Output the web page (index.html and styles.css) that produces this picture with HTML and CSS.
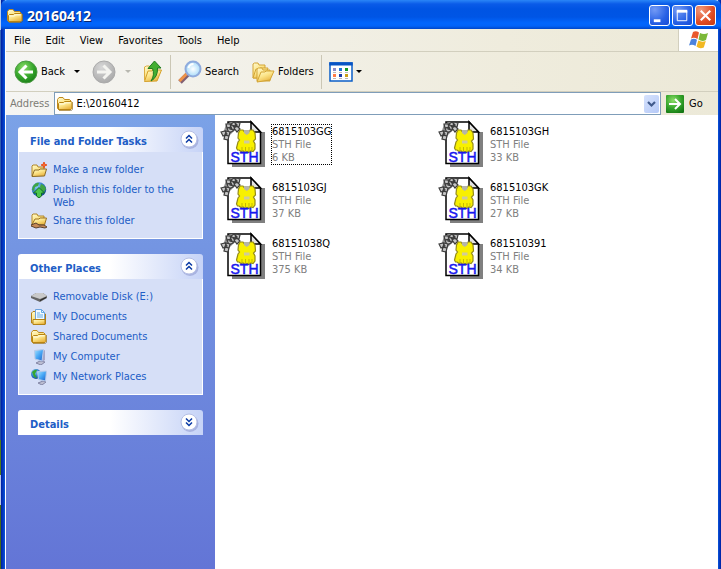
FILE: index.html
```
<!DOCTYPE html>
<html lang="en">
<head>
<meta charset="utf-8">
<title>20160412</title>
<link rel="stylesheet" href="styles.css">
</head>
<body>
<svg class="defs" aria-hidden="true">
  <defs>
    <linearGradient id="gold" x1="0" y1="0" x2="0.6" y2="1"><stop offset="0" stop-color="#fffbd2"/><stop offset="0.5" stop-color="#fce58a"/><stop offset="1" stop-color="#e9b440"/></linearGradient>
    <radialGradient id="green" cx="0.4" cy="0.3" r="0.8"><stop offset="0" stop-color="#8bdd68"/><stop offset="0.55" stop-color="#35a52b"/><stop offset="1" stop-color="#137613"/></radialGradient>
    <radialGradient id="grey" cx="0.4" cy="0.3" r="0.8"><stop offset="0" stop-color="#d8d8d8"/><stop offset="1" stop-color="#a4a4a4"/></radialGradient>
    <radialGradient id="lens"><stop offset="0" stop-color="#fff"/><stop offset="1" stop-color="#a9dcfa"/></radialGradient>
    <linearGradient id="screen" x1="0" y1="0" x2="1" y2="1"><stop offset="0" stop-color="#a7e2ff"/><stop offset="0.5" stop-color="#45a6f5"/><stop offset="1" stop-color="#1b5fc6"/></linearGradient>
    <radialGradient id="globe" cx="0.35" cy="0.3" r="0.8"><stop offset="0" stop-color="#8fd0f5"/><stop offset="0.6" stop-color="#2573c8"/><stop offset="1" stop-color="#123e80"/></radialGradient>
    <symbol id="folder" viewBox="0 0 16 16">
      <path d="M2 14.5h12.5l1-1V6" fill="none" stroke="#6d5a2c" opacity="0.5"/>
      <path d="M.5 12.5v-9l1.500-2h4l1.500 2h5l1.500 1.500v8l-1 1H2z" fill="url(#gold)" stroke="#c08a1c"/>
      <path d="M1.500 13.500V7.500l1-1h4l1-1h6.500l1 1v6l-1 1z" fill="url(#gold)" stroke="#b88413"/>
      <path d="M2.500 8h5l1-1.200h5" fill="none" stroke="#fffce2"/>
    </symbol>
    <symbol id="file" viewBox="0 0 48 48">
      <path d="M12 47v-4h29V12h4v35z" fill="#808080"/>
      <path d="M8 2h23l9.500 10v31.500H8z" fill="#fff" stroke="#000" stroke-width="1.500"/>
      <path d="M31 2v10h9.500z" fill="#e4e4e4" stroke="#000" stroke-width="1.500"/>
      <path d="M6 4l5-2 6 0 3 3-6 6-6 6-5-3z" fill="#8f8f8f"/>
      <g fill="#c6c6c6" stroke="#3c3c3c" stroke-width="1.200">
        <path d="M11 4l3-2 3 3-3 2zM16 2l4 1-1 4-4-1zM14 8l3-2 3 3-3 3zM7 8l4-1 2 4-4 2zM6 4l4 0 1 3-4 1zM11 5l4 1-1 4-4-1z"/>
        <path d="M1 12l4-1 2 3-4 2zM6 11l4 1-1 4-4-1zM5 15l4 1-1 4-4-1z"/>
      </g>
      <path d="M20 10h3l1 1.500h5L30 10h3l2 3 .5 6-2 2 1.500 3v5l-2 2.500-2-.5-2 1.500-2-1-2 1-2-1.500-2 .5-2-1.500-1.500 0-1-2 1.500-6 1.500-2-1.500-2 .5-5z" fill="#f8f000" stroke="#948b17" stroke-width="1.200"/>
      <path d="M24 10h5.500v3l-2.750 2L24 13z" fill="#b5b5a8"/>
      <path d="M24 20.500h5.500v3H24z" fill="#cfcb9c"/>
      <path d="M22 27v4M25.500 27v4M29 27v4M32 27v3" fill="none" stroke="#c5ba00"/>
      <text x="10.500" y="42" class="file-label">STH</text>
    </symbol>
    <symbol id="chevrons" viewBox="0 0 20 20">
      <circle cx="11" cy="11.500" r="8.500" fill="#6671b5" opacity="0.35"/>
      <circle cx="10" cy="10" r="8" fill="#fff" stroke="#b5bfe5"/>
      <path d="M7 9.500l3-3 3 3M7 13.500l3-3 3 3" fill="none" stroke="#0a3aa5" stroke-width="1.500"/>
    </symbol>
  </defs>
</svg>

<div class="window">
  <header class="titlebar">
    <svg class="i16" aria-hidden="true"><use href="#folder"/></svg>
    <h1>20160412</h1>
    <div class="controls">
      <button type="button" aria-label="Minimize"><svg viewBox="0 0 20 20"><path d="M4 14h7v3H4z" fill="#fff"/></svg></button>
      <button type="button" aria-label="Maximize"><svg viewBox="0 0 20 20"><path d="M4.500 5v10.500h10V5" fill="none" stroke="#fff"/><path d="M4 4h11v3H4z" fill="#fff"/></svg></button>
      <button type="button" class="close" aria-label="Close"><svg viewBox="0 0 20 20"><path d="M5 5l10 10M15 5L5 15" stroke="#fff" stroke-width="2.200"/></svg></button>
    </div>
  </header>

  <nav class="menubar">
    <button type="button">File</button>
    <button type="button">Edit</button>
    <button type="button">View</button>
    <button type="button">Favorites</button>
    <button type="button">Tools</button>
    <button type="button">Help</button>
    <div class="brand">
      <svg viewBox="0 0 20 18" aria-hidden="true">
        <path d="M4 1q3-1.500 6 .5L8.500 8Q5 6 2 7.500z" fill="#e9582c"/>
        <path d="M11 2q4 2 8 0l-2 7q-4 2-7.500-.5z" fill="#7bb938"/>
        <path d="M2 8.500q3-1.500 6 .3L6.500 15Q3.500 13 0 14.500z" fill="#4c82dc"/>
        <path d="M9.300 9.500q3.500 2 7.500.5l-2 6.500q-4 2-7.300-1z" fill="#f2b822"/>
      </svg>
    </div>
  </nav>

  <div class="toolbar">
    <button type="button">
      <svg class="i24" viewBox="0 0 24 24" aria-hidden="true"><circle cx="12" cy="12" r="11" fill="url(#green)" stroke="#4c9b43"/><path d="M12.500 5.500L6 12l6.500 6.500M6.500 12H19" fill="none" stroke="#fff" stroke-width="3"/></svg>
      <span>Back</span><i class="caret"></i>
    </button>
    <button type="button" disabled aria-label="Forward">
      <svg class="i24" viewBox="0 0 24 24" aria-hidden="true"><circle cx="12" cy="12" r="11" fill="url(#grey)" stroke="#aaa"/><path d="M11.500 5.500L18 12l-6.500 6.500M17.500 12H5" fill="none" stroke="#f4f4f0" stroke-width="3"/></svg>
      <i class="caret"></i>
    </button>
    <button type="button" aria-label="Up">
      <svg class="up" viewBox="0 0 20 24" aria-hidden="true"><path d="M1.500 20V7l2-1h3l1 2h6v12z" fill="url(#gold)" stroke="#dcae43"/><path d="M1.500 21.500L5 11h4l1-1h8.500L14 21z" fill="url(#gold)" stroke="#d5a22e"/><path d="M5 8.500L11.500 1 18 8h-3.500q.5 9-6.500 13 4-6 1.500-12.500z" fill="#43ae32" stroke="#217c20"/></svg>
    </button>
    <span class="rule"></span>
    <button type="button">
      <svg class="i24" viewBox="0 0 24 24" aria-hidden="true"><path d="M2 22l8-8" stroke="#815f73" stroke-width="5"/><path d="M1.500 21l8-8" stroke="#ef9248" stroke-width="3"/><circle cx="15" cy="9" r="7.500" fill="url(#lens)" stroke="#8fabdd" stroke-width="2"/><path d="M10.500 8q1-4 5-4" fill="none" stroke="#fff" stroke-width="2"/></svg>
      <span>Search</span>
    </button>
    <button type="button">
      <svg class="i24" viewBox="0 0 24 24" aria-hidden="true"><g fill="url(#gold)" stroke="#d3a536"><path d="M2 18V4l1.500-1H7l1 2h6v13z"/><path d="M2 18L5 9h3l1-1h8l-3 10z"/><path d="M6 21V9l1.500-1H11l1 2h7v11z"/><path d="M6 22l4-10h4l1-1h8l-4 9z"/></g></svg>
      <span>Folders</span>
    </button>
    <span class="rule"></span>
    <button type="button" aria-label="Views">
      <svg class="i24" viewBox="0 0 24 20" aria-hidden="true"><path d="M1 1h22v18H1z" fill="#fff" stroke="#0b5fc7" stroke-width="1.500"/><path d="M.3.300h23.400v3.200H.3z" fill="#0754c4"/><path d="M4 6h3v3H4z" fill="#8e8ac7"/><path d="M10 6h3v3h-3z" fill="#1d75d8"/><path d="M16 6h3v3h-3z" fill="#139b22"/><path d="M4 12h3v3H4z" fill="#ff7b48"/><path d="M10 12h3v3h-3z" fill="#1b3da9"/><path d="M16 12h3v3h-3z" fill="#cba017"/><path d="M4 10.500h3m3 0h3m3 0h3M4 16.500h3m3 0h3m3 0h3" stroke="#b8b8b8"/></svg>
      <i class="caret"></i>
    </button>
  </div>

  <form class="address">
    <label for="path">Address</label>
    <div class="combo">
      <svg class="i16" aria-hidden="true"><use href="#folder"/></svg>
      <input id="path" type="text" value="E:\20160412">
      <button type="button" class="drop" aria-label="Address history"><svg viewBox="0 0 14 18"><path d="M3.500 7l3.500 3.500L10.500 7" fill="none" stroke="#405a8c" stroke-width="2.200"/></svg></button>
    </div>
    <button type="button" class="go">
      <svg viewBox="0 0 18 18" aria-hidden="true"><rect width="18" height="18" rx="1" fill="url(#green)"/><path d="M9 4l5 5-5 5M13.500 9H3" fill="none" stroke="#fff" stroke-width="2"/></svg>
      <span>Go</span>
    </button>
  </form>

  <div class="main">
    <aside class="sidebar">
      <section class="panel">
        <div class="panel-head"><h2>File and Folder Tasks</h2><button type="button" aria-label="Collapse tasks"><svg><use href="#chevrons"/></svg></button></div>
        <ul>
          <li><svg viewBox="0 0 16 16" aria-hidden="true"><path d="M1 14V4l1-1h4l1 2h6v8z" fill="url(#gold)" stroke="#b28728"/><path d="M1 14.500L3.500 8H8l1-1h6.500l-2 7z" fill="url(#gold)" stroke="#8c6b26"/><path d="M13 0l.8 2.200L16 3l-2.200.8L13 6l-.8-2.200L10 3l2.200-.8z" fill="#ff6b28" stroke="#e65422"/></svg><a href="#">Make a new folder</a></li>
          <li><svg viewBox="0 0 16 16" aria-hidden="true"><circle cx="8" cy="7.500" r="7.200" fill="url(#globe)"/><path d="M2 4q3-4 6-3l-1 3-3 1-1 4-2-1zM10 2q4 1 5 5l-2 3-3-2-1-3z" fill="#40a543"/><path d="M2.500 11L8 5.500l5.500 5.500h-3v3L8 16l-2.500-2v-3z" fill="#4cc64b" stroke="#126e20"/></svg><a href="#">Publish this folder to the Web</a></li>
          <li><svg viewBox="0 0 16 16" aria-hidden="true"><path d="M1 12V2l1-1h4l1 2h6v8z" fill="url(#gold)" stroke="#b28728"/><path d="M1 11.500L4 6h4l1-1h6.500l-2 7z" fill="url(#gold)" stroke="#9c7322"/><path d="M0 12l5-2 3 2h5l3 2-2 1-5-1-4 1-5-2z" fill="#c68a57" stroke="#58402f"/></svg><a href="#">Share this folder</a></li>
        </ul>
      </section>
      <section class="panel">
        <div class="panel-head"><h2>Other Places</h2><button type="button" aria-label="Collapse places"><svg><use href="#chevrons"/></svg></button></div>
        <ul>
          <li><svg viewBox="0 0 16 16" aria-hidden="true"><path d="M0 7l5-3h7l4 3v2l-7 4L0 9z" fill="#666"/><path d="M0 7l5-3h7l4 3-7 3z" fill="#c9c9c9"/><path d="M9 11.500l6-3" stroke="#222"/></svg><a href="#">Removable Disk (E:)</a></li>
          <li><svg viewBox="0 0 16 16" aria-hidden="true"><path d="M.5 14V4L2 2.500h3V14zM12 5h2.500v10H12z" fill="url(#gold)" stroke="#b38217"/><path d="M4.500 12V.5h6l3 3V12z" fill="#f4faff" stroke="#6aa1dd"/><path d="M10.500.5v3h3M6 4h3M6 6h6M6 8h6" fill="none" stroke="#64aeea"/><path d="M2 15.500v-5h12v5z" fill="url(#gold)" stroke="#b38217"/></svg><a href="#">My Documents</a></li>
          <li><svg viewBox="0 0 16 16" aria-hidden="true"><use href="#folder"/></svg><a href="#">Shared Documents</a></li>
          <li><svg viewBox="0 0 16 16" aria-hidden="true"><path d="M5 14l4-2 5 1-4 3z" fill="#bbbdd1" stroke="#8386a5"/><path d="M12 2l2-1v10l-3 2z" fill="#a5a7c8"/><path d="M3.500 1.500l9-1L11 12l-7-2z" fill="url(#screen)" stroke="#b8c9e8"/></svg><a href="#">My Computer</a></li>
          <li><svg viewBox="0 0 16 16" aria-hidden="true"><circle cx="5" cy="5" r="5" fill="url(#globe)"/><path d="M1 3q3-3 5-2L4 5l2 4-3-1z" fill="#36a630"/><path d="M7 14l5-2 3 1-4 3z" fill="#bbbdd1" stroke="#8386a5"/><path d="M6.500 2.500l9-.5-1 10-7-1.500z" fill="url(#screen)" stroke="#b8c9e8"/></svg><a href="#">My Network Places</a></li>
        </ul>
      </section>
      <section class="panel">
        <div class="panel-head"><h2>Details</h2><button type="button" aria-label="Expand details"><svg viewBox="0 0 20 20"><circle cx="11" cy="11.500" r="8.500" fill="#6671b5" opacity="0.35"/><circle cx="10" cy="10" r="8" fill="#fff" stroke="#b5bfe5"/><path d="M7 6.500l3 3 3-3M7 10.500l3 3 3-3" fill="none" stroke="#0a3aa5" stroke-width="1.500"/></svg></button></div>
      </section>
    </aside>

    <main>
      <ul class="files">
        <li><svg aria-hidden="true"><use href="#file"/></svg><div class="meta focused"><b>6815103GG</b><span>STH File</span><span>6 KB</span></div></li>
        <li><svg aria-hidden="true"><use href="#file"/></svg><div class="meta"><b>6815103GH</b><span>STH File</span><span>33 KB</span></div></li>
        <li><svg aria-hidden="true"><use href="#file"/></svg><div class="meta"><b>6815103GJ</b><span>STH File</span><span>37 KB</span></div></li>
        <li><svg aria-hidden="true"><use href="#file"/></svg><div class="meta"><b>6815103GK</b><span>STH File</span><span>27 KB</span></div></li>
        <li><svg aria-hidden="true"><use href="#file"/></svg><div class="meta"><b>68151038Q</b><span>STH File</span><span>375 KB</span></div></li>
        <li><svg aria-hidden="true"><use href="#file"/></svg><div class="meta"><b>681510391</b><span>STH File</span><span>34 KB</span></div></li>
      </ul>
    </main>
  </div>
</div>
</body>
</html>
```

FILE: styles.css
```
* { box-sizing: border-box; }

body {
  margin: 0;
  padding-left: 1px;
  background: linear-gradient(#b8cdf0 0, #b8cdf0 30px, #3867b8 30px, #234e9f 440px, #4e7c16 440px, #4e7c16 475px, #b9c8ee 475px, #b9c8ee 505px, #466b15 505px);
  font: 11px/13px "DejaVu Sans Condensed", "Noto Sans", sans-serif;
  color: #000;
}

.defs { position: absolute; width: 0; height: 0; }
svg { display: block; flex: none; }
ul { list-style: none; margin: 0; padding: 0; }
h1, h2 { margin: 0; }
button { margin: 0; padding: 0; border: 0; background: none; font: inherit; color: inherit; }
.i16 { width: 16px; height: 16px; }
.i24 { width: 24px; height: 24px; }

.window {
  display: flex;
  flex-direction: column;
  min-height: 100vh;
  border-left: 4px solid #0831d9;
  border-right: 3px solid #0831d9;
  border-image: linear-gradient(90deg, #001ea0, #0855dd 4px, #0855dd calc(100% - 3px), #001ea0) 0 3 0 4;
  background: #fff;
}

.titlebar {
  display: flex;
  align-items: center;
  gap: 4px;
  height: 29px;
  margin: 0 -3px 0 -4px;
  padding: 2px 5px 0 6px;
  border-radius: 6px 6px 0 0;
  background: linear-gradient(#2a86f7 0, #0a5be8 4px, #0054e3 9px, #0055e5 17px, #0266fd 23px, #0263f8 26px, #0046c8 29px);
  color: #fff;
}
.titlebar h1 { flex: 1; font: bold 14px/18px "Noto Sans", sans-serif; text-shadow: 1px 1px #0a246a; }
.controls { display: flex; gap: 2px; }
.controls button {
  width: 21px;
  height: 21px;
  border: 1px solid #fff;
  border-radius: 3px;
  background: radial-gradient(circle at 25% 20%, #739af5, #2861e5 60%, #174bd5);
}
.controls .close { background: radial-gradient(circle at 25% 20%, #f09a7c, #e04b23 60%, #c53a10); }
.controls svg { width: 19px; height: 19px; }

.menubar, .toolbar, .address {
  display: flex;
  align-items: center;
  margin-left: 1px;
  background: linear-gradient(90deg, #f5f5f3, #efecdd 70%, #ece9d8);
}
.menubar { height: 23px; gap: 16px; padding-left: 8px; border-bottom: 1px solid #d2cfbe; }
.menubar { gap: 15px; }
.brand {
  display: flex;
  align-items: center;
  justify-content: center;
  width: 40px;
  height: 22px;
  margin-left: auto;
  border-left: 1px solid #d2cfbe;
  background: #fff;
}
.brand svg { width: 20px; height: 18px; }

.toolbar { height: 40px; gap: 12px; padding-left: 8px; border-bottom: 1px solid #d2cfbe; }
.toolbar button { display: flex; align-items: center; gap: 3px; }
.toolbar span + .caret { margin-left: 6px; }
.toolbar .up { width: 20px; height: 24px; }
.caret { border: 3px solid transparent; border-top-color: #000; border-bottom: 0; }
button:disabled .caret { margin-left: 6px; border-top-color: #b8b8b0; }
.rule { align-self: stretch; width: 1px; margin: 3px -5px 2px; background: #cbc7b5; }

.address { height: 23px; padding-left: 4px; color: #7d7c75; }
.combo {
  display: flex;
  flex: 1;
  align-items: center;
  align-self: stretch;
  margin: 0 5px;
  padding: 0 1px 0 2px;
  border: 1px solid #7f9db9;
  background: #fff;
}
.combo input { flex: 1; min-width: 0; margin: 0; padding: 0 3px; border: 0; outline: 0; font: inherit; color: #000; }
.drop { border-radius: 2px; background: linear-gradient(135deg, #d6e2fd, #b5c9f7); }
.drop svg { width: 15px; height: 18px; }
.go { display: flex; align-items: center; gap: 5px; width: 52px; color: #000; }
.go svg { width: 18px; height: 18px; }

.main { display: flex; flex: 1; margin-left: 1px; }
.sidebar {
  display: flex;
  flex-direction: column;
  flex: none;
  gap: 15px;
  width: 209px;
  padding: 12px;
  background: linear-gradient(#7ba2e7, #6375d6);
}
.panel-head {
  display: flex;
  align-items: flex-start;
  justify-content: space-between;
  height: 25px;
  padding: 2px 4px 0 12px;
  border-radius: 3px 3px 0 0;
  background: linear-gradient(90deg, #fff 50%, #c6d3f7);
  color: #215dc6;
}
.panel-head h2 { padding-top: 6px; font: bold 11px/13px "DejaVu Sans Condensed", "Noto Sans", sans-serif; }
.panel-head svg { width: 20px; height: 20px; }
.panel ul {
  display: flex;
  flex-direction: column;
  gap: 4px;
  padding: 10px 11px 9px 12px;
  border: 1px solid #fff;
  border-top: 0;
  background: #d6dff7;
}
.panel li { display: flex; gap: 6px; min-height: 16px; }
.panel li svg { width: 16px; height: 16px; }
.panel a { padding-top: 1px; color: #215dc6; text-decoration: none; }

main { flex: 1; min-width: 0; padding: 5px; }
.files { display: grid; grid-template-columns: repeat(auto-fill, 218px); grid-auto-rows: 48px; row-gap: 8px; }
.files li { display: flex; gap: 3px; }
.files svg { width: 48px; height: 48px; }
.meta { display: flex; flex-direction: column; align-self: flex-start; margin-top: 4px; border: 1px dotted transparent; color: #808080; }
.meta b { font-weight: normal; color: #000; }
.meta.focused { border-color: #000; }
.file-label { font: 14px "Liberation Sans", sans-serif; fill: #1717ee; stroke: #1717ee; stroke-width: 0.5px; }
```
